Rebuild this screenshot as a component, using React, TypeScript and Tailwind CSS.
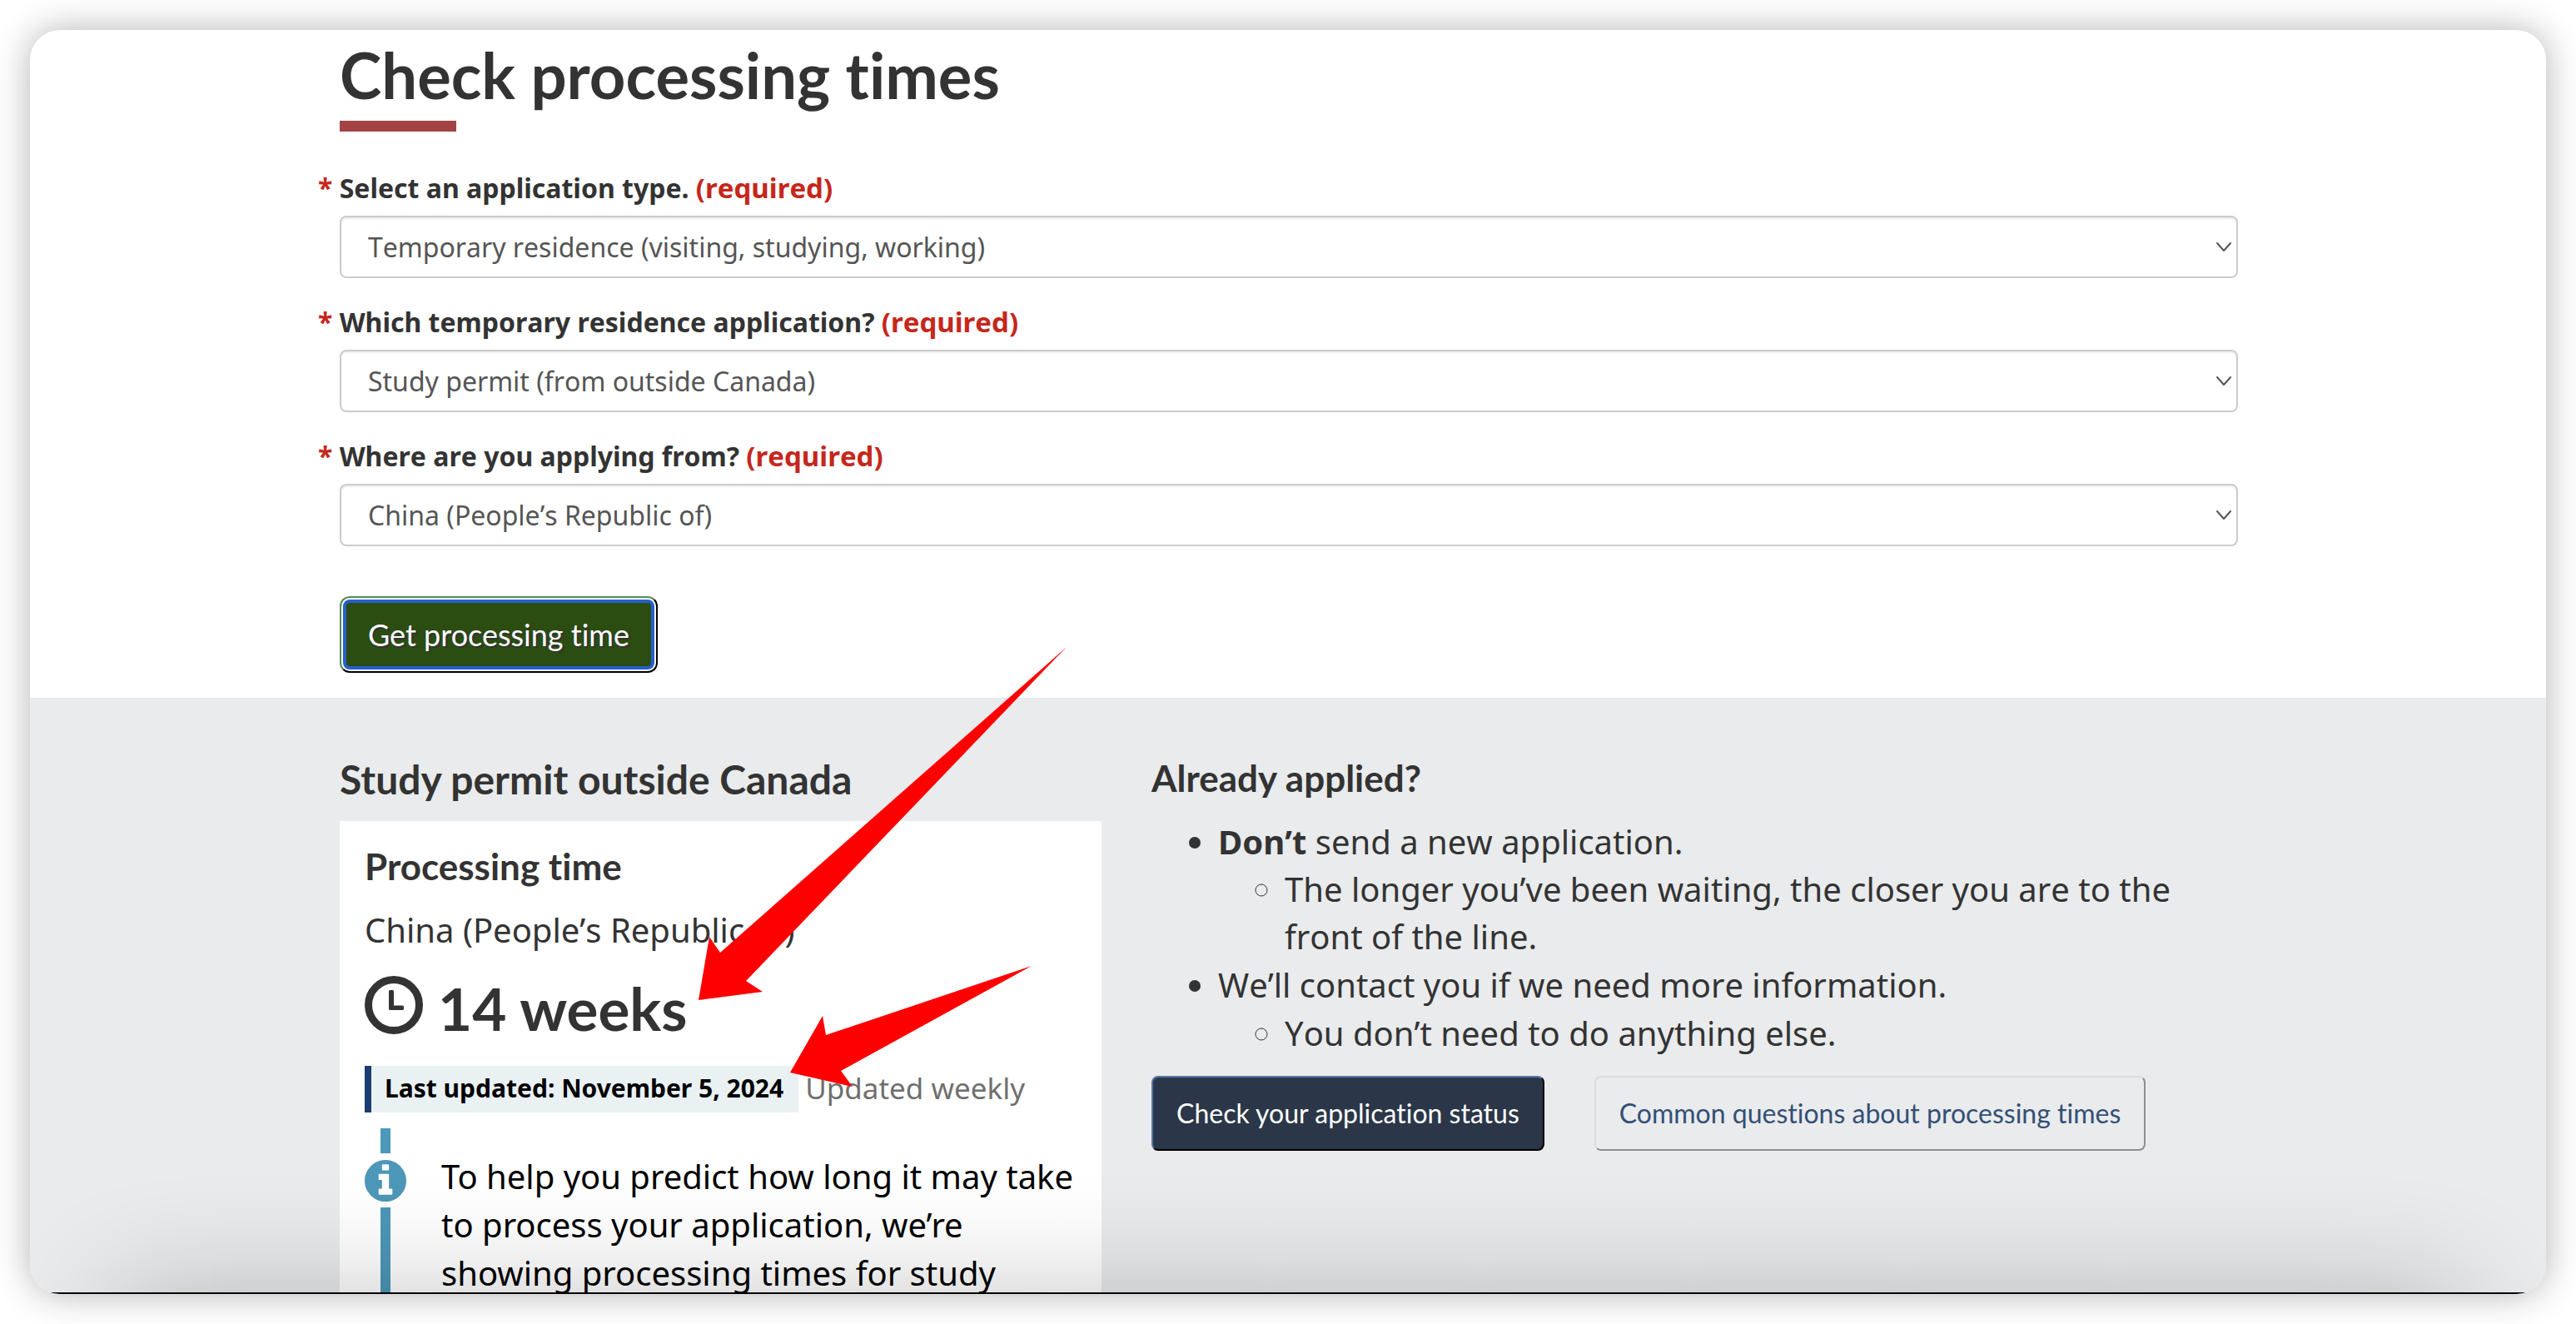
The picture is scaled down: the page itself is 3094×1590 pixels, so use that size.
import { useId } from "react";

function SelectField({ label, value }: { label: string; value: string }) {
  const id = useId();
  return (
    <div className="flex flex-col">
      <label htmlFor={id} className="-ml-[26px] text-[32px] leading-[46px] font-bold text-[#333]">
        <span className="text-[#c5271c]">* </span>
        {label} <span className="text-[33px] text-[#c5271c]">(required)</span>
      </label>
      <div className="relative mt-[10px]">
        <select
          id={id}
          className="block h-[75px] w-full appearance-none rounded-lg border-2 border-[#ccc] bg-white px-8 text-[32px] text-[#555] shadow-[inset_0_2px_2px_rgba(0,0,0,0.075)]"
        >
          <option>{value}</option>
        </select>
        <svg
          aria-hidden="true"
          viewBox="0 0 18 12"
          className="pointer-events-none absolute top-8 right-2 h-3 w-[18px]"
          fill="none"
          stroke="#555"
          strokeWidth="2"
          strokeLinecap="round"
          strokeLinejoin="round"
        >
          <path d="M1 1 L9 10 L17 1" />
        </svg>
      </div>
    </div>
  );
}

function ClockIcon() {
  return (
    <svg aria-hidden="true" viewBox="0 0 70 70" className="mb-2 size-[70px] shrink-0">
      <circle cx="35" cy="35" r="30.500" fill="none" stroke="#333" strokeWidth="9" />
      <path
        d="M30.500 17h3a1.500 1.500 0 0 1 1.500 1.500V35.500h10.500a1.500 1.500 0 0 1 1.500 1.500v2.500a1.500 1.500 0 0 1-1.500 1.500h-15a1.500 1.500 0 0 1-1.500-1.500v-21a1.500 1.500 0 0 1 1.500-1.500z"
        fill="#333"
      />
    </svg>
  );
}

function InfoIcon() {
  return (
    <svg aria-hidden="true" viewBox="0 128 1536 1536" className="size-[50px]" fill="#4d97b8">
      <path d="M1024 1376v-160q0-14-9-23t-23-9h-96V672q0-14-9-23t-23-9H544q-14 0-23 9t-9 23v160q0 14 9 23t23 9h96v320h-96q-14 0-23 9t-9 23v160q0 14 9 23t23 9h448q14 0 23-9t9-23zm-128-896V320q0-14-9-23t-23-9H672q-14 0-23 9t-9 23v160q0 14 9 23t23 9h192q14 0 23-9t9-23zm640 416q0 209-103 385.5T1153.5 1561 768 1664t-385.500-103T103 1281.500 0 896t103-385.500T382.500 231 768 128t385.500 103T1433 510.500 1536 896z" />
    </svg>
  );
}

function Arrows() {
  return (
    <svg
      aria-hidden="true"
      viewBox="0 0 900 560"
      className="pointer-events-none absolute -top-[78px] left-0 h-[560px] w-[900px]"
      fill="#ff0000"
    >
      <path d="M873 17 L457 384 L444 365 L431 441 L508 431 L488 418 Z" />
      <path d="M831 400 L584 483 L580 460 L541 528 L616 545 L602 526 Z" />
    </svg>
  );
}

export default function App() {
  return (
    <div className="h-screen bg-white p-9 font-['Noto_Sans',sans-serif] text-[#333] [font-variant-ligatures:none]">
      <main className="relative flex h-full flex-col overflow-hidden rounded-[36px] bg-white shadow-[0_0_44px_rgba(0,0,0,0.3)]">
        <section className="pr-10 pb-[30px] pl-[42px]">
          <div className="mx-auto max-w-[2280px]">
            <h1 className="pt-2 font-['Lato',sans-serif] text-[76px] leading-[92px] font-bold">
              Check processing times
            </h1>
            <div className="mt-[9px] h-[13px] w-[140px] bg-[#a34344]" />
            <form className="flex flex-col" onSubmit={(e) => e.preventDefault()}>
              <div className="mt-[45px] flex flex-col gap-[30px] [font-kerning:none]">
                <SelectField label="Select an application type." value="Temporary residence (visiting, studying, working)" />
                <SelectField label="Which temporary residence application?" value="Study permit (from outside Canada)" />
                <SelectField label="Where are you applying from?" value="China (People’s Republic of)" />
              </div>
              <button
                type="submit"
                className="mt-[60px] h-[92px] self-start rounded-[12px] border-2 border-t-[#578a5c] border-r-black border-b-black border-l-[#578a5c] bg-white p-[2px] font-['Lato',sans-serif] text-[36px] text-white [text-shadow:2px_2px_1px_#333]"
              >
                <span className="flex h-full items-center rounded-[8px] border-4 border-[#2660cc] bg-[#2b4d12] px-[26px]">
                  Get processing time
                </span>
              </button>
            </form>
          </div>
        </section>

        <section className="grow bg-[#e9ebec] pr-10 pl-[42px]">
          <div className="relative mx-auto grid max-w-[2280px] grid-cols-12 gap-x-[60px] pt-[68px]">
            <div className="col-span-5">
              <h2 className="font-['Lato',sans-serif] text-[48px] leading-[60px] font-bold">
                Study permit outside Canada
              </h2>
              <div className="mt-5 bg-white px-[30px] pt-7">
                <h3 className="font-['Lato',sans-serif] text-[44px] leading-[52px] font-bold">Processing time</h3>
                <p className="mt-[22px] text-[40px] leading-[57px] [font-kerning:none]">China (People’s Republic of)</p>
                <p className="mt-[20px] flex items-center gap-[18px] font-['Lato',sans-serif] text-[71px] leading-[92px] font-bold">
                  <ClockIcon />
                  14 weeks
                </p>
                <p className="mt-[23px] flex items-center gap-2 text-[35px] leading-[54px] whitespace-nowrap text-[#6f6f6f]">
                  <strong className="border-l-8 border-[#1c3d70] bg-[#e9f1f3] pr-[18px] pb-[2px] pl-4 text-[30px] text-black">
                    Last updated: November 5, 2024
                  </strong>
                  <span className="pb-[2px]">Updated weekly</span>
                </p>
                <div className="mt-[19px] flex gap-[42px] text-black">
                  <div className="flex w-[50px] flex-col items-center">
                    <div className="mb-2 h-[30px] w-3 bg-[#4d97b8]" />
                    <InfoIcon />
                    <div className="mt-[7px] w-3 grow bg-[#4d97b8]" />
                  </div>
                  <p className="flex-1 pt-[29px] pb-5 text-[40px] leading-[58px]">
                    To help you predict how long it may take to process your application, we’re showing processing times for study
                  </p>
                </div>
              </div>
            </div>

            <div className="col-span-7">
              <h2 className="font-['Lato',sans-serif] text-[44px] leading-[56px] font-bold">Already applied?</h2>
              <ul className="mt-[20px] list-disc pl-20 text-[40px] leading-[57px] [font-kerning:none]">
                <li>
                  <strong>Don’t</strong> send a new application.
                  <ul className="list-[circle] pb-px pl-20">
                    <li>The longer you’ve been waiting, the closer you are to the front of the line.</li>
                  </ul>
                </li>
                <li>
                  We’ll contact you if we need more information.
                  <ul className="list-[circle] pt-px pl-20">
                    <li>You don’t need to do anything else.</li>
                  </ul>
                </li>
              </ul>
              <div className="mt-[23px] flex gap-[60px] font-['Lato',sans-serif] text-[32px]">
                <a
                  href="#status"
                  className="flex h-[90px] items-center rounded-lg border-2 border-t-[#5775a3] border-r-black border-b-black border-l-[#5775a3] bg-[#2b3748] px-[28px] text-white"
                >
                  Check your application status
                </a>
                <a
                  href="#questions"
                  className="flex h-[90px] items-center rounded-lg border-2 border-t-[#dadcde] border-r-[#8c8e90] border-b-[#8c8e90] border-l-[#dadcde] bg-[#eaebed] px-[28px] text-[#335075]"
                >
                  Common questions about processing times
                </a>
              </div>
            </div>
            <Arrows />
          </div>
        </section>
        <div className="pointer-events-none absolute inset-x-[100px] top-full h-[300px] shadow-[0_0_140px_rgba(0,0,0,0.24)]" />
        <div className="absolute inset-x-0 bottom-0 h-[2px] bg-black" />
      </main>
    </div>
  );
}
